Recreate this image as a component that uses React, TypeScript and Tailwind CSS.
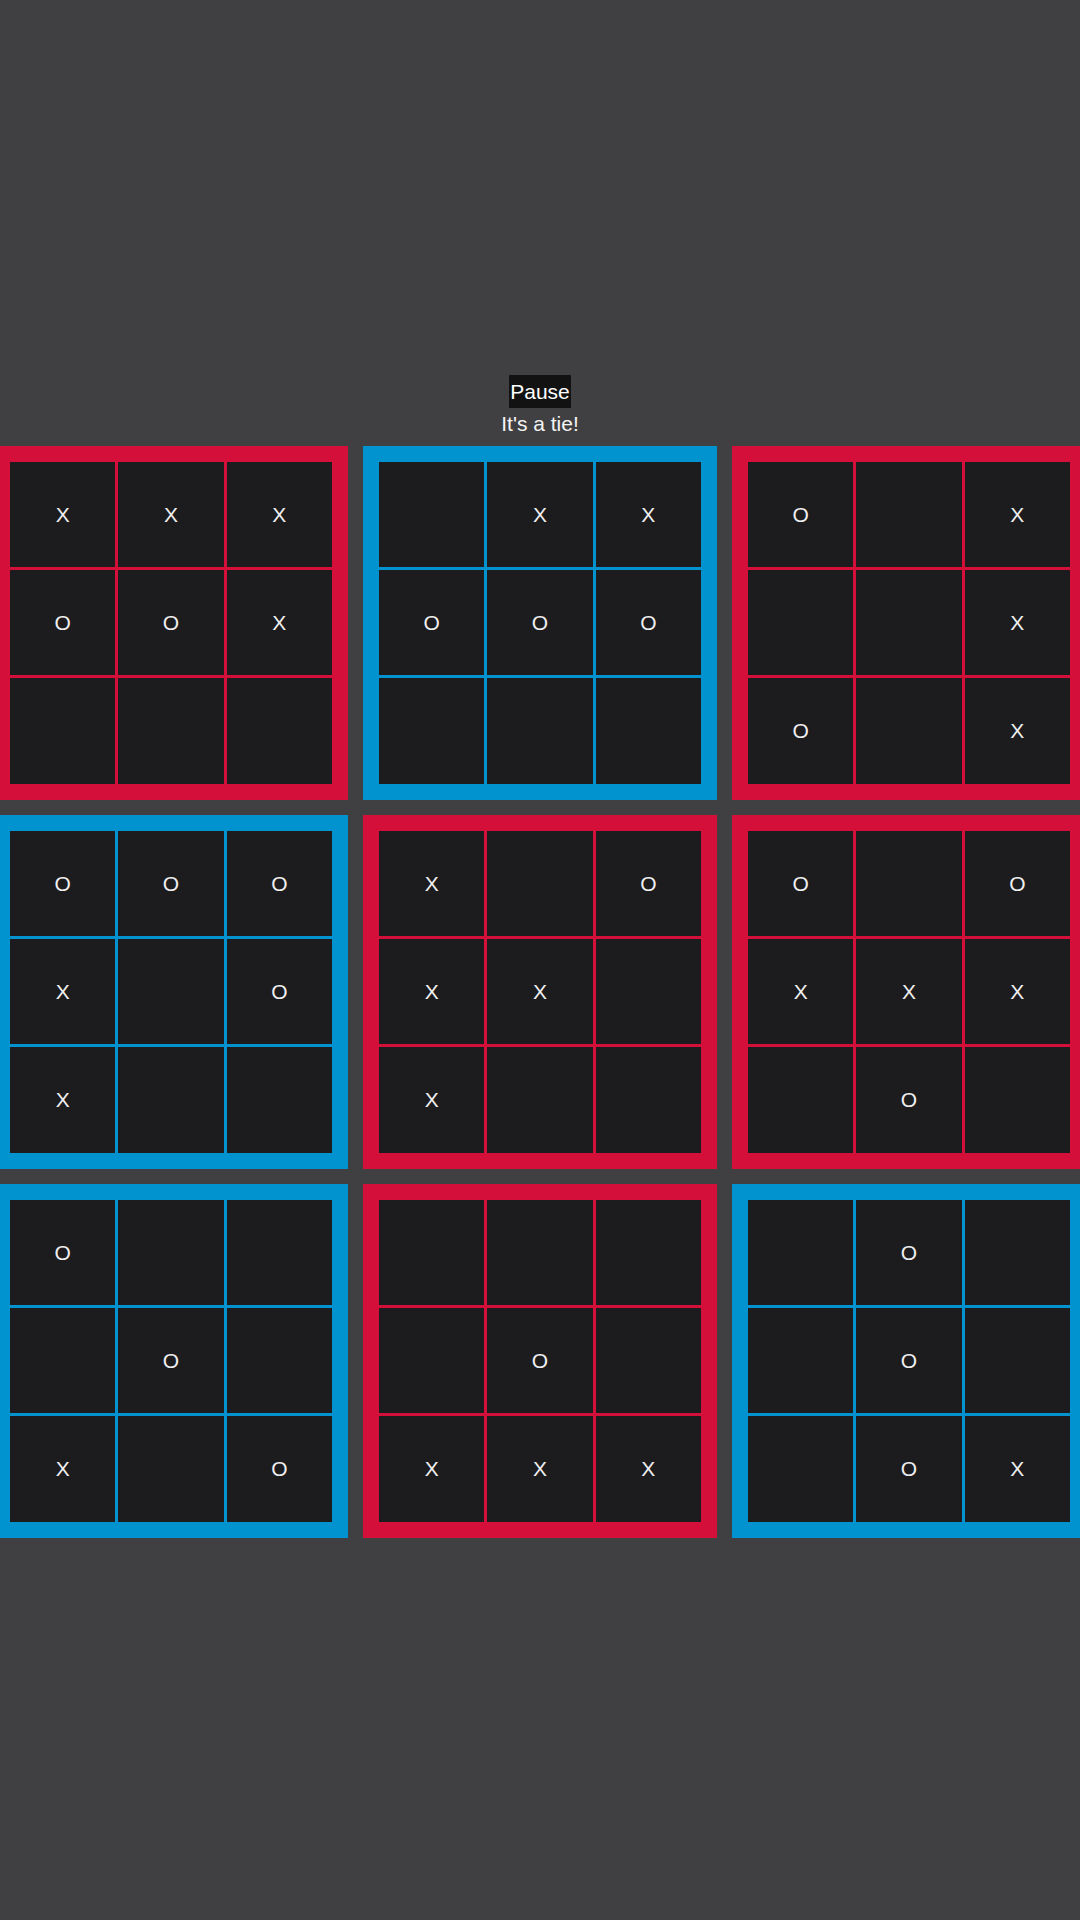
import React from "react";

type Mark = "X" | "O" | "";

const boards: { winner: "X" | "O"; cells: Mark[] }[] = [
  { winner: "X", cells: ["X", "X", "X", "O", "O", "X", "", "", ""] },
  { winner: "O", cells: ["", "X", "X", "O", "O", "O", "", "", ""] },
  { winner: "X", cells: ["O", "", "X", "", "", "X", "O", "", "X"] },
  { winner: "O", cells: ["O", "O", "O", "X", "", "O", "X", "", ""] },
  { winner: "X", cells: ["X", "", "O", "X", "X", "", "X", "", ""] },
  { winner: "X", cells: ["O", "", "O", "X", "X", "X", "", "O", ""] },
  { winner: "O", cells: ["O", "", "", "", "O", "", "X", "", "O"] },
  { winner: "X", cells: ["", "", "", "", "O", "", "X", "X", "X"] },
  { winner: "O", cells: ["", "O", "", "", "O", "", "", "O", "X"] },
];

function Board({ winner, cells }: { winner: "X" | "O"; cells: Mark[] }) {
  const tone = winner === "X" ? "bg-[#d4103a]" : "bg-[#0093d0]";
  return (
    <div className={`h-[354px] w-[354px] p-[16px] ${tone}`}>
      <div className="grid h-full w-full grid-cols-3 grid-rows-3 gap-[3px]">
        {cells.map((mark, i) => (
          <div key={i} className="flex items-center justify-center bg-[#1c1b1e] text-[21px] leading-none text-[#efefef]">
            {mark}
          </div>
        ))}
      </div>
    </div>
  );
}

export default function App() {
  return (
    <div
      className="flex min-h-screen flex-col items-center justify-center overflow-hidden bg-[#403f41] pb-[8px] text-[21px] leading-[1.5] text-white"
      style={{ fontFamily: '"Liberation Sans", Arial, sans-serif' }}
    >
      <button className="bg-[#121212] px-px py-px text-[21px] leading-[1.5] text-white">Pause</button>
      <div className="text-[#f4f4f4]">It's a tie!</div>
      <div className="mt-[6px] grid w-[1092px] shrink-0 grid-cols-3 gap-[15px]">
        {boards.map((b, i) => (
          <Board key={i} winner={b.winner} cells={b.cells} />
        ))}
      </div>
    </div>
  );
}
